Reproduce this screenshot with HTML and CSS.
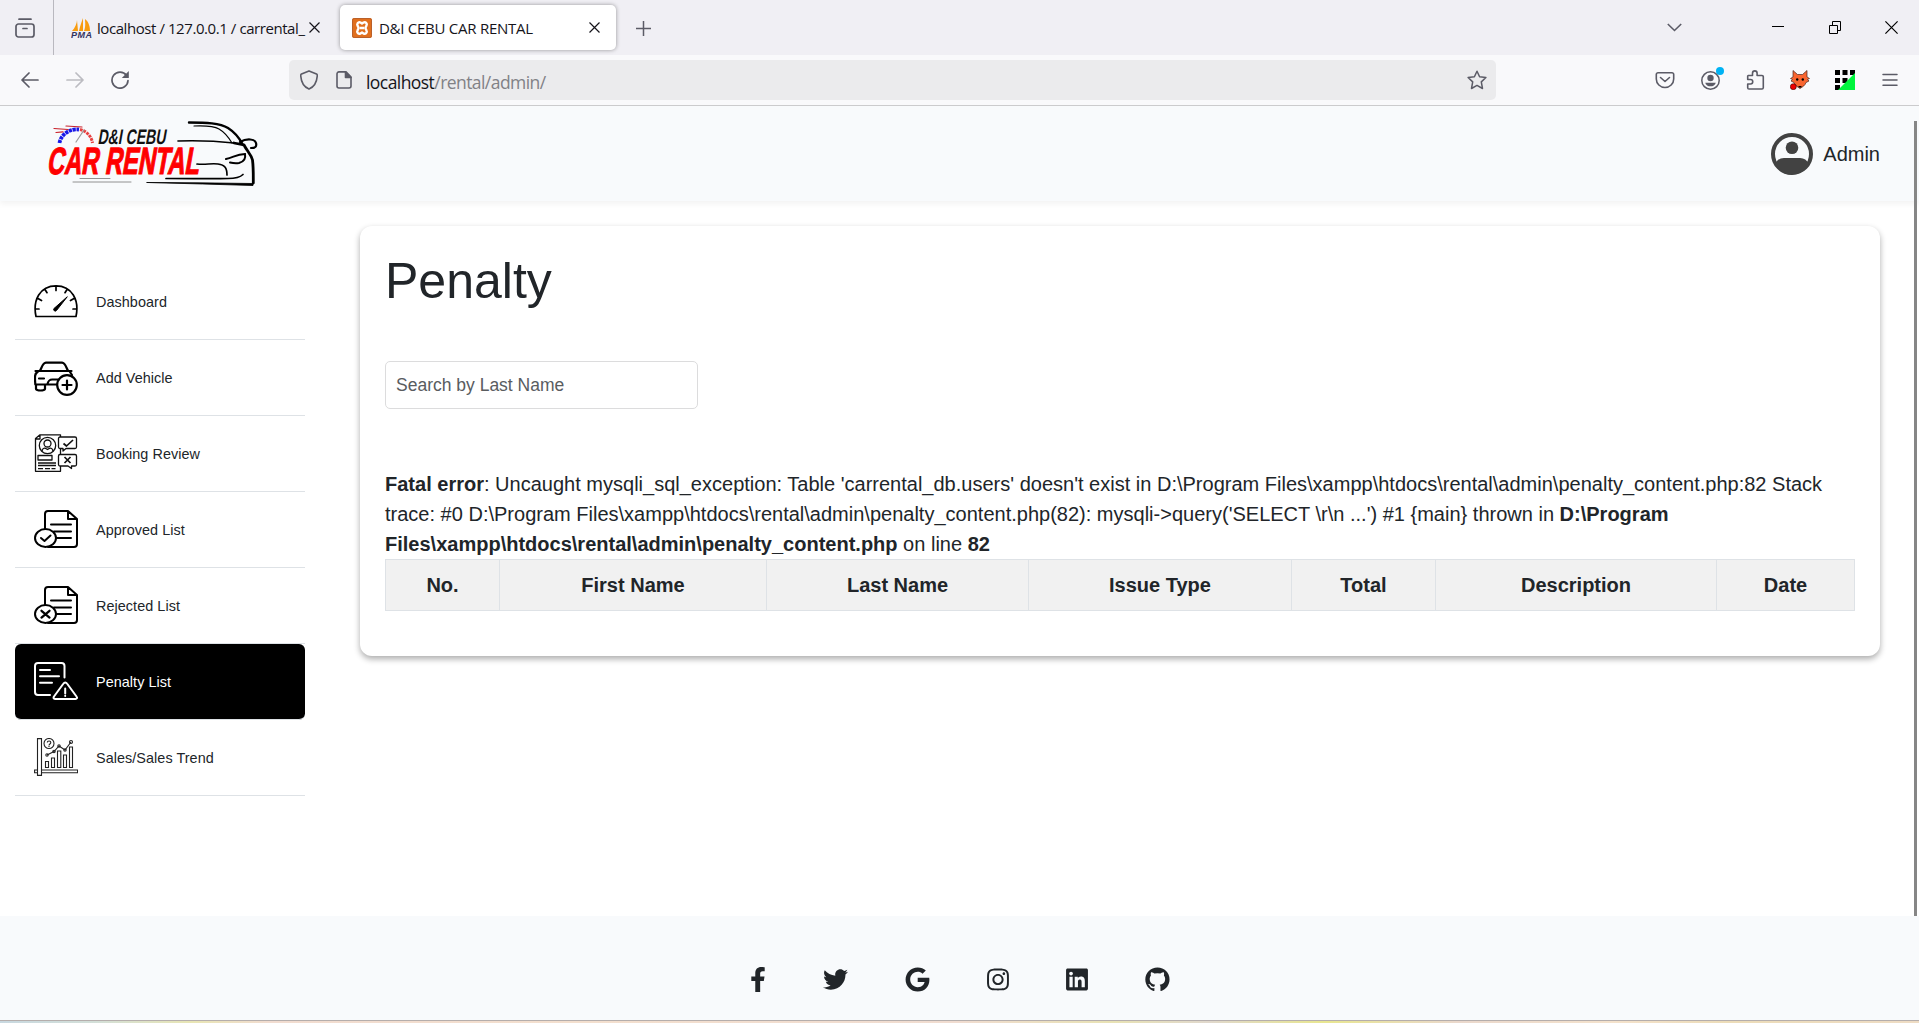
FILE: index.html
```
<!DOCTYPE html>
<html lang="en">
<head>
<meta charset="utf-8">
<title>D&amp;I CEBU CAR RENTAL</title>
<link rel="stylesheet" href="styles.css">
</head>
<body>
<div class="window">
  <div class="tabbar">
    <div class="view-btn">
      <svg width="20" height="20" viewBox="0 0 20 20" fill="none" stroke="#5b5b66" stroke-width="1.7" stroke-linecap="round"><rect x="1" y="6" width="18" height="13" rx="2.5"/><path d="M4 1.2h12M8 10.5h4"/></svg>
    </div>
    <div class="tab">
      <svg class="fav" width="21" height="20" viewBox="0 0 21 20"><path d="M1 13C4 10 6 5 6 2L7 13zM8 13C9 8 11 3 12 0L12 13zM13 13C15 8 14 4 14 1 18 4 19 9 19 13z" fill="#f89c0e"/><text x="0" y="19.5" class="pma" textLength="21">PMA</text></svg>
      <span class="tab-title first">localhost / 127.0.0.1 / carrental_</span>
      <svg class="x" width="11" height="11" viewBox="0 0 11 11" stroke="#15141a" stroke-width="1.2"><path d="M.5.5l10 10M10.5.5l-10 10"/></svg>
    </div>
    <div class="tab active">
      <svg class="fav" width="20" height="20" viewBox="0 0 20 20"><rect width="20" height="20" rx="2" fill="#e06f1e"/><rect x=".5" y=".5" width="19" height="19" rx="2" fill="none" stroke="#b9602a"/><path d="M5.500 5.500a2.200 2.200 0 0 1 3-1l1.500 1 1.500-1a2.200 2.200 0 0 1 3 3L13.300 10l1.200 2.500a2.200 2.200 0 0 1-3 3l-1.500-1-1.500 1a2.200 2.200 0 0 1-3-3L6.700 10 5.500 7.500a2.200 2.200 0 0 1 0-2M8 10h4" fill="none" stroke="#fff" stroke-width="2.400" stroke-linejoin="round"/></svg>
      <span class="tab-title">D&amp;I CEBU CAR RENTAL</span>
      <svg class="x" width="11" height="11" viewBox="0 0 11 11" stroke="#15141a" stroke-width="1.2"><path d="M.5.5l10 10M10.5.5l-10 10"/></svg>
    </div>
    <svg class="plus" width="15" height="15" viewBox="0 0 15 15" stroke="#5b5b66" stroke-width="1.5"><path d="M7.500 0v15M0 7.500h15"/></svg>
    <div class="win-controls">
      <svg width="15" height="9" viewBox="0 0 15 9" fill="none" stroke="#5b5b66" stroke-width="1.600"><path d="M.8 1l6.700 6.500L14.200 1"/></svg>
      <svg class="min" width="12" height="13" viewBox="0 0 12 13" stroke="#000"><path d="M0 5.500h12"/></svg>
      <svg class="restore" width="12" height="13" viewBox="0 0 12 13" fill="none" stroke="#000"><path d="M.5 4.500h8v8h-8zM3.500 4.500v-4h8v9h-3"/></svg>
      <svg width="13" height="13" viewBox="0 0 13 13" stroke="#000" stroke-width="1.200"><path d="M.4.4l12.200 12.200M12.600.4L.4 12.600"/></svg>
    </div>
  </div>

  <div class="toolbar">
    <div class="nav">
      <svg width="18" height="18" viewBox="0 0 18 18" fill="none" stroke="#5b5b66" stroke-width="1.700" stroke-linecap="round" stroke-linejoin="round"><path d="M17 9H1.500M8 2L1 9l7 7"/></svg>
      <svg width="18" height="18" viewBox="0 0 18 18" fill="none" stroke="#bcbcc1" stroke-width="1.700" stroke-linecap="round" stroke-linejoin="round"><path d="M1 9h15.500M10 2l7 7-7 7"/></svg>
      <svg width="18" height="18" viewBox="0 0 18 18" fill="none" stroke="#5b5b66" stroke-width="1.700" stroke-linecap="round"><path d="M15.500 4.500A8 8 0 1 0 17 9.500"/><path d="M17.800 0v7h-7z" fill="#5b5b66" stroke="none"/></svg>
    </div>
    <div class="urlbar">
      <svg width="18" height="20" viewBox="0 0 18 20" fill="none" stroke="#5b5b66" stroke-width="1.600" stroke-linejoin="round"><path d="M9 .9l7.500 3c1 .4.800 1.500.7 2.500C16.800 11.500 15 16.500 9 19.100 3 16.500 1.200 11.500.8 6.400.7 5.400.5 4.300 1.500 3.900z"/></svg>
      <svg class="doc" width="16" height="18" viewBox="0 0 16 18" fill="none" stroke="#5b5b66" stroke-width="1.600" stroke-linejoin="round"><path d="M3 .9h7L15 6v9a2 2 0 0 1-2 2H3a2 2 0 0 1-2-2V3A2 2 0 0 1 3 .9z"/><path d="M9.500 1v5.500H15z" fill="#5b5b66"/></svg>
      <span class="url">localhost<i>/rental/admin/</i></span>
      <svg class="star" width="20" height="20" viewBox="0 0 20 20" fill="none" stroke="#5b5b66" stroke-width="1.500" stroke-linejoin="round"><path d="M10 1.200l2.600 5.500 6.300.8-4.600 4.400 1.200 6.600L10 15.400l-5.500 3.100 1.200-6.600L1.100 7.500l6.300-.8z"/></svg>
    </div>
    <div class="tools">
      <svg width="20" height="20" viewBox="0 0 20 20" fill="none" stroke="#5b5b66" stroke-width="1.600" stroke-linecap="round" stroke-linejoin="round"><path d="M3 2.800h14a1.700 1.700 0 0 1 1.700 1.700V9A8.700 8.500 0 0 1 1.300 9V4.500A1.700 1.700 0 0 1 3 2.800zM5.500 7.500l4.500 4 4.500-4"/></svg>
      <svg class="over" width="20" height="20" viewBox="0 0 20 20"><circle cx="10.500" cy="10.500" r="8.700" fill="none" stroke="#5b5b66" stroke-width="1.500"/><circle cx="10.500" cy="8" r="3.200" fill="#5b5b66"/><path d="M5.200 12.700h10.600c-.6 2.500-2.800 3.600-5.300 3.600s-4.700-1.100-5.300-3.600z" fill="#5b5b66"/><circle cx="20" cy="1" r="4" fill="#00b3f4"/></svg>
      <svg width="20" height="20" viewBox="0 0 20 20" fill="none" stroke="#5b5b66" stroke-width="1.600" stroke-linejoin="round"><path d="M3.200 5.500H7.500V3.200a2.300 2.300 0 0 1 4.600 0v2.300h4.900A1.300 1.300 0 0 1 18.300 6.800v11A1.300 1.300 0 0 1 17 19H4A1.300 1.300 0 0 1 2.700 17.700V14H5.500a2 2 0 0 0 0-4.500H2.700V6z"/></svg>
      <svg width="20" height="20" viewBox="0 0 20 20"><path d="M3 .5l4.500 4h5l4.500-4V7l2.500 1.500-2 1 1.500 1.500-3 1.500c-1 3-3 4-6 6-3-2-5-3-6-6L1 11l1.500-1.500-2-1L3 7z" fill="#f9652f" stroke="#4b2a22" stroke-width=".7"/><circle cx="7.200" cy="9.500" r="1.200"/><circle cx="12.800" cy="9.500" r="1.200"/><path d="M8 16h4l-2 2z"/><circle cx="3.300" cy="16.700" r="3" fill="#e00" stroke="#300" stroke-width=".6"/></svg>
      <svg width="20" height="20" viewBox="0 0 20 20"><path d="M0 0h5v5H0zM7.500 0h5v5h-5zM15 0h5v5h-5zM0 8h5v5H0zM7.500 8h5v5h-5zM0 15h5v5H0z"/><path d="M20 3v17H3z" fill="#00f53d"/></svg>
      <svg width="20" height="20" viewBox="0 0 20 20" stroke="#5b5b66" stroke-width="1.500" stroke-linecap="round"><path d="M3 4.500h14M3 10h14M3 15.200h14"/></svg>
    </div>
  </div>

  <div class="page">
    <header class="site-head">
      <svg class="logo" width="214" height="66" viewBox="0 0 214 66" fill="none" stroke="#000" stroke-linecap="round">
        <path d="M13.500 22A17.500 16 0 0 1 33 8.500" stroke="#1818e8" stroke-width="3.800" stroke-dasharray="3.200 .7" stroke-linecap="butt"/>
        <path d="M34 8.500A17 16 0 0 1 46.500 22" stroke="#e84040" stroke-width="3" stroke-dasharray="2.700 .9" stroke-linecap="butt"/>
        <path d="M10 11.500l7-.7M8 7.500l14 1M20 5l16 1" stroke="#c8202a" stroke-width="1.200"/>
        <path d="M30 21l8-12" stroke="#999" stroke-width="1.200"/>
        <path d="M143 1.500C160 1.500 174 2 182 7c8 5 12 11 15 17" stroke-width="2.400"/>
        <path d="M148 5c12-.5 20 0 25 3 7 4 10 9 13 14" stroke-width="1.200"/>
        <path d="M132 20c18-.6 36-.2 56 2" stroke-width="1.700"/>
        <path d="M188 22l10 2c3 6 7 9 8.500 15 1 8 .8 15 .8 23" stroke-width="2.800"/>
        <path d="M101 61.500l50 .3 56 .7v2l-50-1.500z" fill="#000" stroke-width=".8"/>
        <path d="M194 21c7-4 15-3 16 1s-1 5-5 5" stroke-width="2.200"/>
        <path d="M180 38c7-1 10-5 19-5 1 5-2 8-6 9-3 .5-6 .2-9-.5" stroke-width="2"/>
        <path d="M151 43c9 1 14-1 21 0 7 1 9 4 9 11M120 57.500c29 0 46 .5 62 0 8 0 12-1 15-4" stroke-width="1.700"/>
        <path d="M27 61h58M34 57.500h30" stroke="#777" stroke-width=".8"/>
        <g class="slanted">
          <text x="55.500" y="23" class="logo-top" textLength="68" lengthAdjust="spacingAndGlyphs">D&amp;I CEBU</text>
          <text x="10" y="53.500" class="logo-main" textLength="152" lengthAdjust="spacingAndGlyphs">CAR RENTAL</text>
        </g>
      </svg>
      <div class="user">
        <svg width="42" height="42" viewBox="0 0 42 42"><circle cx="21" cy="21" r="19" fill="none" stroke="#424242" stroke-width="4"/><circle cx="21" cy="14.800" r="6.300" fill="#424242"/><path d="M4 31c2-4 5-6 9-6h16c4 0 7 2 9 6-3 6-9 10.500-17 10.500S7 37 4 31z" fill="#424242"/></svg>
        <span>Admin</span>
      </div>
    </header>

    <div class="content">
      <nav class="sidebar">
        <a class="item"><svg width="44" height="38" viewBox="0 0 44 38" fill="none" stroke="#000" stroke-width="1.700" stroke-linecap="round" stroke-linejoin="round"><path d="M2 34.500C-1.500 18 6 3.800 22 3.800S45.500 18 42 34.500zM22 4v4.500M11 7.500l2 3.200M33 7.500l-2 3.200M4 16.500l3.500 2M40 16.500l-3.500 2M1.500 27H5M42.500 27H39"/><path d="M33 15L20 26.500a1.600 1.600 0 0 0 2.500 2z" fill="#000" stroke-width="1"/></svg><span>Dashboard</span></a>
        <a class="item"><svg width="44" height="38" viewBox="0 0 44 38" fill="none" stroke="#000" stroke-width="2.200" stroke-linecap="round" stroke-linejoin="round"><path d="M6 12.500c2-3 2.500-7.500 6-7.800h16c3.500.3 4 4.800 6 7.800M1.500 13h36M4 13.500C0 16 1 20 1.300 26.500h12c1-4 2-5 5-5h6M36 14l2 3M5 20.500h5M2 27v4c1 2 8 2 9 0v-4M14 26.500h9"/><circle cx="33" cy="27" r="9.800" fill="#fff"/><path d="M33 22.500v9M28.500 27h9"/></svg><span>Add Vehicle</span></a>
        <a class="item"><svg width="44" height="38" viewBox="0 0 44 38" fill="none" stroke="#111" stroke-width="1.300" stroke-linejoin="round"><path d="M1.500 4.500L6 .8h20.500v36.500h-25zM6 1v4H1.500M4 21.500h14v4.500H4zM4 29h18M4 31.500h18M4 34.700h5M11 34.700h5M17.500 34.700h4"/><circle cx="13.500" cy="11.500" r="8.200"/><circle cx="13.500" cy="9.500" r="3.500"/><path d="M8 17c1-4 3-3 5.500-1.500C16 14 18 13 19 17"/><path fill="#fff" d="M26 3h15a1.500 1.500 0 0 1 1.500 1.500V13a1.500 1.500 0 0 1-1.500 1.500h-9L29 17v-2.500h-3a1.500 1.500 0 0 1-1.500-1.500V4.500A1.500 1.500 0 0 1 26 3zM26 20.500h15a1.500 1.500 0 0 1 1.500 1.500v8.500A1.500 1.500 0 0 1 41 32h-3.500v2.500L34 32h-8a1.500 1.500 0 0 1-1.500-1.500V22a1.500 1.500 0 0 1 1.500-1.500z"/><path d="M29.500 9.500l3 2.500 6.500-6M30.500 23l6 6M36.500 23l-6 6" stroke-width="1.700"/></svg><span>Booking Review</span></a>
        <a class="item"><svg width="44" height="38" viewBox="0 0 44 38" fill="none" stroke="#000" stroke-width="2" stroke-linecap="round" stroke-linejoin="round"><path d="M11 19V4a3 3 0 0 1 3-3h20l9 8v25a3 3 0 0 1-3 3H14M34 1v8h9M17 14.500h20M20 21.500h17M22 28h15"/><ellipse cx="11.500" cy="28" rx="10.500" ry="9" fill="#fff"/><path d="M7 28l3.500 3 6-5.500"/></svg><span>Approved List</span></a>
        <a class="item"><svg width="44" height="38" viewBox="0 0 44 38" fill="none" stroke="#000" stroke-width="2" stroke-linecap="round" stroke-linejoin="round"><path d="M11 19V4a3 3 0 0 1 3-3h20l9 8v25a3 3 0 0 1-3 3H14M34 1v8h9M17 14.500h20M20 21.500h17M22 28h15"/><ellipse cx="11.500" cy="28" rx="10.500" ry="9" fill="#fff"/><path d="M7.500 24.800l8 6.800M15.500 24.800l-8 6.800" stroke-width="2.300"/></svg><span>Rejected List</span></a>
        <a class="item current"><svg width="44" height="38" viewBox="0 0 44 38" fill="none" stroke="#fff" stroke-width="2" stroke-linecap="round" stroke-linejoin="round"><path d="M30.500 15.500V4a3 3 0 0 0-3-3H4a3 3 0 0 0-3 3v26a3 3 0 0 0 3 3h12M6 8h10M6 14.300h19M6 20.800h12"/><path d="M29.500 21.500L20 34.500c-1 1.500 0 2.500 1.500 2.500h20c1.500 0 2-1.200 1-2.500l-9.500-13c-1-1.500-2.500-1.500-3.500 0zM31.200 26.500v5M31.200 33.700v.2"/></svg><span>Penalty List</span></a>
        <a class="item"><svg width="44" height="38" viewBox="0 0 44 38" fill="none" stroke="#222" stroke-width="1.100"><path d="M.6 32h43v2.800H.6z"/><path d="M3.500.6h4v36.800h-4z" fill="#fff"/><path d="M11.500 23.500h3v6h-3zM17.500 20h3v9.500h-3zM23.500 13h3.300v16.500h-3.300zM29.500 17h3v12.500h-3zM35.500 9h3v20.500h-3zM13 17l7-3.500 5-5.500 6 4 6-8"/><circle cx="15" cy="5.500" r="5"/><path d="M13.300 4.500c0-2 3.500-2 3.500 0 0 1.500-1.800 1.500-1.800 3M15 8v1"/><circle cx="13" cy="17" r="1.200"/><circle cx="20" cy="13.500" r="1.200"/><circle cx="25" cy="8" r="1.200"/><circle cx="31" cy="12" r="1.200"/><circle cx="37" cy="4" r="1.500"/></svg><span>Sales/Sales Trend</span></a>
      </nav>
      <main class="card">
        <h1>Penalty</h1>
        <input class="search" type="text" placeholder="Search by Last Name">
        <p class="error"><b>Fatal error</b>: Uncaught mysqli_sql_exception: Table 'carrental_db.users' doesn't exist in D:\Program Files\xampp\htdocs\rental\admin\penalty_content.php:82 Stack<br>trace: #0 D:\Program Files\xampp\htdocs\rental\admin\penalty_content.php(82): mysqli-&gt;query('SELECT \r\n ...') #1 {main} thrown in <b>D:\Program<br>Files\xampp\htdocs\rental\admin\penalty_content.php</b> on line <b>82</b></p>
        <table>
          <colgroup><col class="c1"><col class="c2"><col class="c3"><col class="c4"><col class="c5"><col class="c6"><col class="c7"></colgroup>
          <tr><th>No.</th><th>First Name</th><th>Last Name</th><th>Issue Type</th><th>Total</th><th>Description</th><th>Date</th></tr>
        </table>
      </main>
      <div class="scrollbar"></div>
    </div>

    <footer class="site-foot">
      <svg width="16" height="25" viewBox="0 0 320 512"><path d="M279.140 288l14.220-92.660h-88.910v-60.130c0-25.350 12.420-50.060 52.240-50.060h40.420V6.260S260.430 0 225.360 0c-73.220 0-121.080 44.380-121.080 124.720v70.620H22.890V288h81.390v224h100.170V288z"/></svg>
      <svg width="25" height="25" viewBox="0 0 512 512"><path d="M459.370 151.716c.325 4.548.325 9.097.325 13.645 0 138.720-105.583 298.558-298.558 298.558-59.452 0-114.680-17.219-161.137-47.106 8.447.974 16.568 1.299 25.340 1.299 49.055 0 94.213-16.568 130.274-44.832-46.132-.975-84.792-31.188-98.112-72.772 6.498.974 12.995 1.624 19.818 1.624 9.421 0 18.843-1.300 27.614-3.573-48.081-9.747-84.143-51.980-84.143-102.985v-1.299c13.969 7.797 30.214 12.670 47.431 13.319-28.264-18.843-46.781-51.005-46.781-87.391 0-19.492 5.197-37.360 14.294-52.954 51.655 63.675 129.300 105.258 216.365 109.807-1.624-7.797-2.599-15.918-2.599-24.040 0-57.828 46.782-104.934 104.934-104.934 30.213 0 57.502 12.670 76.670 33.137 23.715-4.548 46.456-13.320 66.599-25.340-7.798 24.366-24.366 44.833-46.132 57.827 21.117-2.273 41.584-8.122 60.426-16.243-14.292 20.791-32.161 39.308-52.628 54.253z"/></svg>
      <svg width="25" height="25" viewBox="0 0 488 512"><path d="M488 261.800C488 403.300 391.100 504 248 504 110.800 504 0 393.200 0 256S110.800 8 248 8c66.800 0 123 24.500 166.300 64.900l-67.500 64.900C258.500 52.600 94.300 116.600 94.300 256c0 86.500 69.100 156.600 153.700 156.600 98.200 0 135-70.400 140.800-106.900H248v-85.300h236.100c2.300 12.700 3.900 24.900 3.900 41.400z"/></svg>
      <svg width="22" height="25" viewBox="0 0 448 512"><path d="M224.100 141c-63.600 0-114.900 51.300-114.900 114.900s51.300 114.900 114.900 114.900S339 319.500 339 255.900 287.700 141 224.100 141zm0 189.600c-41.100 0-74.700-33.500-74.700-74.700s33.500-74.700 74.700-74.700 74.700 33.500 74.700 74.700-33.600 74.700-74.700 74.700zm146.400-194.300c0 14.900-12 26.800-26.800 26.800-14.900 0-26.800-12-26.800-26.800s12-26.800 26.800-26.800 26.800 12 26.800 26.800zm76.100 27.200c-1.700-35.900-9.900-67.700-36.200-93.900-26.200-26.200-58-34.400-93.900-36.200-37-2.100-147.900-2.100-184.900 0-35.800 1.700-67.600 9.900-93.900 36.100s-34.400 58-36.200 93.900c-2.100 37-2.100 147.900 0 184.900 1.700 35.900 9.900 67.700 36.200 93.900s58 34.400 93.900 36.200c37 2.100 147.900 2.100 184.900 0 35.900-1.700 67.700-9.900 93.900-36.200 26.200-26.200 34.400-58 36.200-93.900 2.100-37 2.100-147.800 0-184.800zM398.800 388c-7.800 19.600-22.900 34.700-42.600 42.600-29.500 11.700-99.500 9-132.100 9s-102.700 2.600-132.100-9c-19.600-7.800-34.700-22.900-42.600-42.600-11.700-29.500-9-99.500-9-132.100s-2.600-102.700 9-132.100c7.800-19.600 22.900-34.700 42.600-42.600 29.500-11.700 99.500-9 132.100-9s102.700-2.600 132.100 9c19.600 7.800 34.700 22.900 42.600 42.600 11.700 29.500 9 99.500 9 132.100s2.700 102.700-9 132.100z"/></svg>
      <svg width="22" height="25" viewBox="0 0 448 512"><path d="M416 32H31.900C14.300 32 0 46.500 0 64.300v383.400C0 465.500 14.300 480 31.900 480H416c17.600 0 32-14.500 32-32.300V64.300c0-17.800-14.400-32.300-32-32.300zM135.400 416H69V202.200h66.500V416zm-33.200-243c-21.300 0-38.500-17.300-38.500-38.500S80.900 96 102.200 96c21.200 0 38.500 17.300 38.500 38.500 0 21.300-17.200 38.500-38.500 38.500zm282.100 243h-66.400V312c0-24.800-.5-56.700-34.500-56.700-34.600 0-39.900 27-39.900 54.900V416h-66.400V202.200h63.700v29.200h.9c8.900-16.800 30.600-34.500 62.900-34.500 67.200 0 79.700 44.300 79.700 101.900V416z"/></svg>
      <svg width="25" height="25" viewBox="0 0 16 16"><path d="M8 .3C3.600.3.200 3.700.2 8c0 3.400 2.200 6.300 5.300 7.400.4.100.5-.2.500-.4v-1.500c-2.200.5-2.700-.9-2.700-.9-.4-.9-.9-1.200-.9-1.200-.7-.5.100-.5.100-.5.800.1 1.200.8 1.200.8.700 1.200 1.900.9 2.300.7.100-.5.300-.9.500-1.100-1.700-.2-3.500-.9-3.500-3.800 0-.8.300-1.500.8-2.100-.1-.2-.3-1 .1-2 0 0 .6-.2 2.100.8a7.300 7.300 0 0 1 3.900 0c1.500-1 2.100-.8 2.100-.8.400 1 .2 1.800.1 2 .5.600.8 1.300.8 2.100 0 2.900-1.800 3.600-3.500 3.800.3.300.5.700.5 1.500V15c0 .2.100.5.500.4 3.100-1.100 5.300-4 5.300-7.400C15.800 3.700 12.400.3 8 .3z"/></svg>
    </footer>
  </div>
  <div class="desktop-edge"></div>
</div>
</body>
</html>
```
FILE: styles.css
```
* { box-sizing: border-box; }
body { margin: 0; font-family: "Liberation Sans", Arial, sans-serif; color: #212529; background: #fff; overflow: hidden; }
svg { display: block; flex: none; }
.window { width: 1919px; height: 1023px; display: flex; flex-direction: column; }

.tabbar { height: 55px; flex: none; background: #f0eff4; display: flex; align-items: center; font: 15px "Open Sans", "Noto Sans", sans-serif; color: #15141a; }
.view-btn { width: 54px; height: 55px; border-right: 1px solid #b9b8bf; padding: 18px 0 0 15px; }
.tab { width: 276px; height: 45px; display: flex; align-items: center; padding: 0 16px 0 12px; }
.tab:nth-child(2) { width: 281px; padding: 0 16px 0 17px; }
.tab.active { background: #fff; border-radius: 5px; box-shadow: 0 0 4px rgba(0,0,0,.38); margin-left: 5px; }
.tab-title { white-space: nowrap; margin-left: 7px; flex: 1; letter-spacing: -.26px; line-height: 24px; }
.tab-title.first { margin-left: 5px; letter-spacing: -.43px; }
.tab .x { margin-left: 4px; }
.pma { font: italic bold 9px "Liberation Sans", sans-serif; fill: #33335f; }
.plus { margin: 2px 0 0 20px; }
.win-controls { margin-left: auto; display: flex; align-items: center; padding-right: 21px; }
.min { margin-left: 90px; }
.restore { margin: 0 44px 0 45px; }

.toolbar { height: 51px; flex: none; background: #f9f9fb; border-bottom: 1px solid #ccccce; display: flex; align-items: center; }
.nav { width: 289px; display: flex; gap: 27px; padding-left: 21px; }
.urlbar { width: 1207px; height: 40px; border-radius: 5px; background: #ebebed; display: flex; align-items: center; padding: 0 9px 0 11px; }
.doc { margin: 0 14px 0 18px; }
.url { font: 17.500px/24px "Open Sans", "Noto Sans", sans-serif; letter-spacing: -.56px; color: #15141a; padding-top: 3px; }
.url i { font-style: normal; color: #818186; }
.star { margin-left: auto; }
.tools { display: flex; gap: 25px; margin-left: 159px; }
.over { overflow: visible; }

.page { flex: 1; display: flex; flex-direction: column; min-height: 0; }
.site-head { height: 95px; flex: none; background: #f8fafc; box-shadow: 0 3px 6px rgba(0,0,0,.05); display: flex; justify-content: space-between; align-items: center; padding: 0 39px 0 46px; }
.logo { overflow: visible; }
.slanted { transform: skewX(-10deg); }
.logo-top { font: bold 21px "Liberation Sans", sans-serif; fill: #111; stroke: none; }
.logo-main { font: bold 38px "Liberation Sans", sans-serif; fill: #f00; stroke: #f00; stroke-width: 1.200; }
.user { display: flex; align-items: center; gap: 10px; font-size: 20px; }
.user svg { margin-top: 1px; }
.user span { padding-top: 2px; }

.content { flex: 1; display: flex; align-items: flex-start; padding-left: 15px; }
.sidebar { width: 290px; padding-top: 63px; }
.item { height: 76px; display: flex; align-items: center; gap: 18px; padding: 0 0 0 19px; border-bottom: 1px solid #dee2e6; font-size: 14.400px; letter-spacing: .06px; }
.item svg { margin-bottom: 1px; }
.item.current { background: #000; color: #fff; border-radius: 6px; }
.card { width: 1520px; height: 430px; margin: 25px 34px 0 55px; padding: 25px; border-radius: 12px; box-shadow: 0 3px 6px rgba(0,0,0,.33); }
h1 { font-size: 50px; line-height: 60px; font-weight: 400; margin: 0 0 50px; }
.search { display: block; width: 313px; height: 48px; border: 1px solid #dcdcdd; border-radius: 5px; padding: 0 10px; font: 17.500px "Liberation Sans", sans-serif; }
.search::placeholder { color: #595c5f; opacity: 1; }
.error { font-size: 20px; line-height: 30px; margin: 60px 0 0; white-space: nowrap; letter-spacing: .005px; }
table { width: 1470px; height: 52px; table-layout: fixed; border-collapse: collapse; font-size: 20px; }
th { background: #f1f1f1; border: 1px solid #dee2e6; text-align: center; padding: 0; }
.c1 { width: 114px; } .c2 { width: 267px; } .c3 { width: 262px; } .c4 { width: 263px; } .c5 { width: 144px; } .c6 { width: 281px; } .c7 { width: 138px; }
.scrollbar { width: 3px; height: 795px; margin-top: -80px; background: #868686; }

.site-foot { height: 104px; flex: none; background: #f8fafc; display: flex; align-items: center; padding: 22px 0 0 750px; fill: #212529; }
.site-foot svg:nth-child(2) { margin-left: 57px; }
.site-foot svg:nth-child(3) { margin-left: 57px; }
.site-foot svg:nth-child(4) { margin-left: 57px; }
.site-foot svg:nth-child(5) { margin-left: 57px; }
.site-foot svg:nth-child(6) { margin-left: 57px; }
.desktop-edge { height: 3px; flex: none; border-top: 1px solid #b5aeac; background: linear-gradient(90deg, #c8d8e0, #d3dfd8 5%, #e8e5b4 10%, #f1dcd0 14%, #f3dfce 30%, #f0dcd0 50%, #e8e2b4 58%, #e0d8cc 63%, #e8e690 69%, #ead8cc 76%, #f4e2cc 84%, #ecdcb8 90%, #eedcc4); }
```
